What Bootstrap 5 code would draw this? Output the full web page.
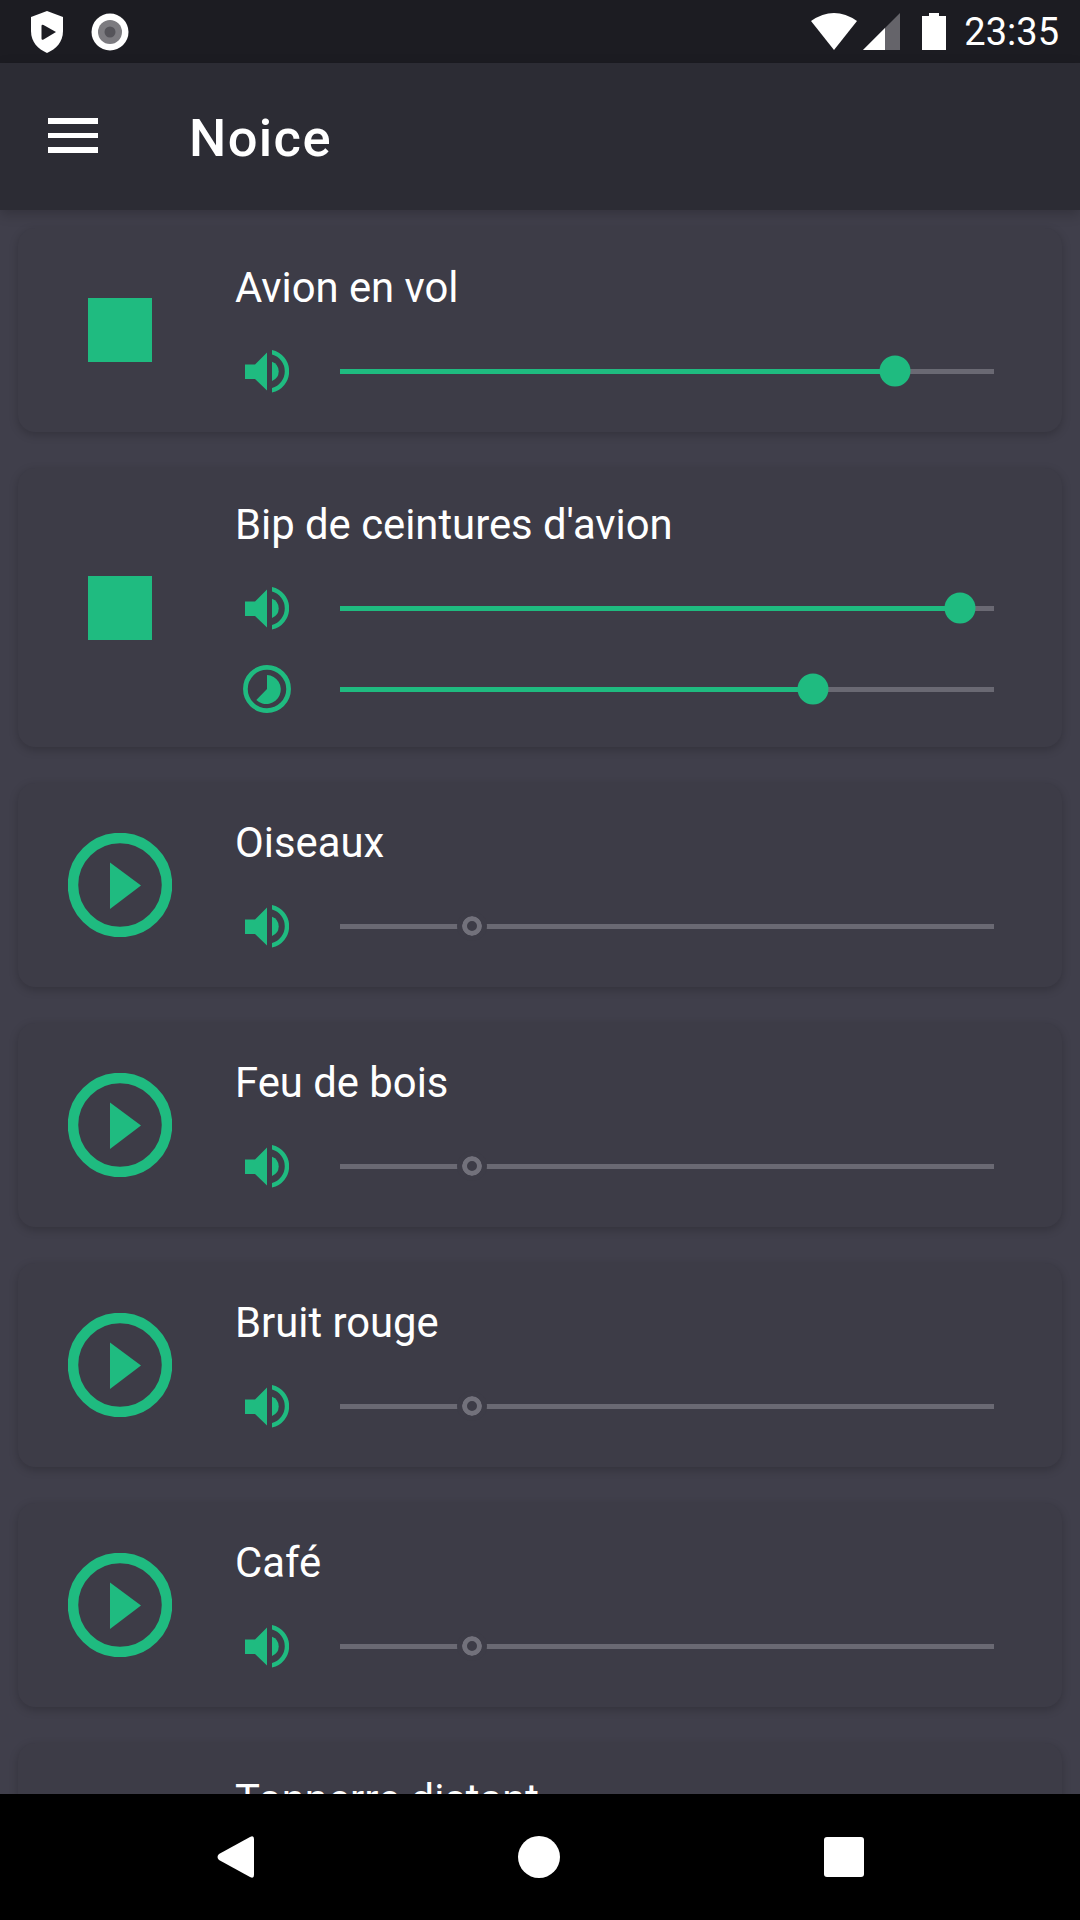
<!DOCTYPE html>
<html lang="fr">
<head>
    <meta charset="UTF-8">
    <meta name="viewport" content="width=device-width, initial-scale=1.0">
    <title>Noice</title>
    <link href="https://cdn.jsdelivr.net/npm/bootstrap@5.3.0/dist/css/bootstrap.min.css" rel="stylesheet">
    <style>
        html, body {
            height: 100%;
        }
        body {
            background: #403f4b;
            font-family: Roboto, "Liberation Sans", sans-serif;
            color: #fff;
            overflow: hidden;
        }
        .status-bar {
            height: 63px;
            flex: none;
            background: #1c1c22;
            padding: 0 21px 0 30px;
        }
        .status-gap-a { margin-left: 27px; }
        .status-gap-b { margin-left: 6px; }
        .status-gap-c { margin-left: 22px; }
        .status-time {
            font-size: 38px;
            line-height: 1;
            margin-left: 18px;
        }
        .app-bar {
            height: 147px;
            flex: none;
            background: #2c2c34;
            box-shadow: 0 4px 12px rgba(0, 0, 0, .2);
            position: relative;
            z-index: 2;
            padding-left: 48px;
        }
        .app-menu {
            margin-bottom: 2px;
        }
        .app-title {
            font-size: 52.500px;
            font-weight: 500;
            line-height: 1;
            margin-left: 91px;
            padding-top: 3px;
            letter-spacing: 1.400px;
        }
        .sound-list {
            flex: 1 1 0;
            min-height: 0;
            overflow: hidden;
            padding: 18px 18px 0;
        }
        .sound-card {
            background: #3d3c47;
            border: 0;
            border-radius: 17px;
            box-shadow: 0 3px 10px rgba(0, 0, 0, .2);
            margin-bottom: 36px;
            flex-direction: row;
            align-items: center;
            flex-shrink: 0;
        }
        .play-col {
            width: 204px;
            flex: none;
        }
        .sound-body {
            flex: 1 1 0;
            padding: 31px 68px 20px 13px;
        }
        .sound-body-tall {
            padding-top: 28px;
            padding-bottom: 17px;
        }
        .sound-name {
            font-size: 41.800px;
            line-height: 58px;
            height: 58px;
            margin-bottom: 13px;
        }
        .slider-row {
            height: 82px;
        }
        .slider-row + .slider-row {
            margin-top: -1px;
        }
        .row-icon {
            width: 105px;
            flex: none;
            padding-left: 10px;
        }
        .timer-icon {
            margin-left: -2px;
        }
        .slider-track {
            flex: 1 1 0;
            height: 5px;
            background: #6a6973;
            position: relative;
        }
        .slider-fill {
            position: absolute;
            left: 0;
            top: 0;
            bottom: 0;
            background: #1fbb80;
        }
        .slider-thumb {
            position: absolute;
            top: 50%;
            width: 31px;
            height: 31px;
            border-radius: 50%;
            background: #1fbb80;
            transform: translate(-50%, -50%);
        }
        .slider-zero {
            position: absolute;
            top: 50%;
            width: 20px;
            height: 20px;
            border-radius: 50%;
            border: 5.500px solid #72717b;
            background: #3d3c47;
            outline: 5px solid #3d3c47;
            transform: translate(-50%, -50%);
        }
        .nav-bar {
            height: 126px;
            flex: none;
            gap: 264px;
            background: #000;
            position: relative;
            z-index: 2;
        }
    </style>
</head>
<body class="d-flex flex-column">
    <svg width="0" height="0" class="position-absolute">
        <defs>
            <symbol id="ico-play" viewBox="0 0 104 104">
                <circle cx="52" cy="52" r="47" fill="none" stroke="#1fbb80" stroke-width="10.500"/>
                <path d="M42 29.500 L73 52.500 L42 76 Z" fill="#1fbb80"/>
            </symbol>
            <symbol id="ico-volume" viewBox="0 -1 44 44">
                <path d="M0 14.500 H10 L22 2.500 V40.500 L10 29 H0 Z" fill="#1fbb80"/>
                <path d="M27 0 A21.800 21.800 0 0 1 27 42.600 V38 A17.300 17.300 0 0 0 27 4.600 Z" fill="#1fbb80"/>
                <path d="M27 11.700 A10.300 10.300 0 0 1 27 31 Z" fill="#1fbb80"/>
            </symbol>
            <symbol id="ico-timer" viewBox="0 0 48 48">
                <circle cx="24" cy="24" r="21.600" fill="none" stroke="#1fbb80" stroke-width="4.700"/>
                <path d="M24 10 A14.500 14.500 0 1 1 13.300 35 L24 24 Z" fill="#1fbb80"/>
            </symbol>
        </defs>
    </svg>

    <div class="status-bar d-flex align-items-center">
        <svg width="34" height="42" viewBox="0 0 34 42">
            <path d="M17 0 L33 6 V20 C33 31 26 38 17 42 C8 38 1 31 1 20 V6 Z" fill="#fff"/>
            <path d="M11.500 15 Q11.500 13 13.500 14 L26 21 L13.500 28.500 Q11.500 29.500 11.500 27.500 Z" fill="#1c1c22"/>
        </svg>
        <svg width="38" height="38" viewBox="0 0 38 38" class="status-gap-a">
            <circle cx="19" cy="19" r="18.500" fill="#fff"/>
            <circle cx="19" cy="19" r="12" fill="#7c7b80"/>
            <circle cx="19" cy="19" r="5.500" fill="#55545a"/>
        </svg>
        <div class="ms-auto d-flex align-items-center">
            <svg width="46" height="38" viewBox="0 0 46 38">
                <path d="M0 8 Q23 -8 46 8 L23 37 Z" fill="#fff"/>
            </svg>
            <svg width="37" height="37" viewBox="0 0 37 37" class="status-gap-b">
                <path d="M37 0 V37 H0 Z" fill="#65646a"/>
                <path d="M22 15 V37 H0 Z" fill="#fff"/>
            </svg>
            <svg width="24" height="38" viewBox="0 0 24 38" class="status-gap-c">
                <path d="M7 0 H17 V3 H24 V37 H0 V3 H7 Z" fill="#fff"/>
            </svg>
            <span class="status-time">23:35</span>
        </div>
    </div>

    <div class="app-bar d-flex align-items-center">
        <svg width="50" height="35" viewBox="0 0 50 35" class="app-menu">
            <path d="M0 0 H50 V6 H0 Z M0 15 H50 V20 H0 Z M0 29 H50 V35 H0 Z" fill="#fff"/>
        </svg>
        <span class="app-title">Noice</span>
    </div>

    <div class="sound-list d-flex flex-column">
        <div class="card sound-card">
            <div class="play-col d-flex justify-content-center">
                <svg width="64" height="64"><rect width="64" height="64" fill="#1fbb80"/></svg>
            </div>
            <div class="sound-body">
                <div class="sound-name">Avion en vol</div>
                <div class="slider-row d-flex align-items-center">
                    <div class="row-icon"><svg width="44" height="44" class="d-block"><use href="#ico-volume"/></svg></div>
                    <div class="slider-track">
                        <div class="slider-fill" style="width: 84.900%"></div>
                        <div class="slider-thumb" style="left: 84.900%"></div>
                    </div>
                </div>
            </div>
        </div>

        <div class="card sound-card">
            <div class="play-col d-flex justify-content-center">
                <svg width="64" height="64"><rect width="64" height="64" fill="#1fbb80"/></svg>
            </div>
            <div class="sound-body sound-body-tall">
                <div class="sound-name">Bip de ceintures d'avion</div>
                <div class="slider-row d-flex align-items-center">
                    <div class="row-icon"><svg width="44" height="44" class="d-block"><use href="#ico-volume"/></svg></div>
                    <div class="slider-track">
                        <div class="slider-fill" style="width: 94.800%"></div>
                        <div class="slider-thumb" style="left: 94.800%"></div>
                    </div>
                </div>
                <div class="slider-row d-flex align-items-center">
                    <div class="row-icon"><svg width="48" height="48" class="d-block timer-icon"><use href="#ico-timer"/></svg></div>
                    <div class="slider-track">
                        <div class="slider-fill" style="width: 72.400%"></div>
                        <div class="slider-thumb" style="left: 72.400%"></div>
                    </div>
                </div>
            </div>
        </div>

        <div class="card sound-card">
            <div class="play-col d-flex justify-content-center">
                <svg width="104" height="104"><use href="#ico-play"/></svg>
            </div>
            <div class="sound-body">
                <div class="sound-name">Oiseaux</div>
                <div class="slider-row d-flex align-items-center">
                    <div class="row-icon"><svg width="44" height="44" class="d-block"><use href="#ico-volume"/></svg></div>
                    <div class="slider-track"><div class="slider-zero" style="left: 20.200%"></div></div>
                </div>
            </div>
        </div>

        <div class="card sound-card">
            <div class="play-col d-flex justify-content-center">
                <svg width="104" height="104"><use href="#ico-play"/></svg>
            </div>
            <div class="sound-body">
                <div class="sound-name">Feu de bois</div>
                <div class="slider-row d-flex align-items-center">
                    <div class="row-icon"><svg width="44" height="44" class="d-block"><use href="#ico-volume"/></svg></div>
                    <div class="slider-track"><div class="slider-zero" style="left: 20.200%"></div></div>
                </div>
            </div>
        </div>

        <div class="card sound-card">
            <div class="play-col d-flex justify-content-center">
                <svg width="104" height="104"><use href="#ico-play"/></svg>
            </div>
            <div class="sound-body">
                <div class="sound-name">Bruit rouge</div>
                <div class="slider-row d-flex align-items-center">
                    <div class="row-icon"><svg width="44" height="44" class="d-block"><use href="#ico-volume"/></svg></div>
                    <div class="slider-track"><div class="slider-zero" style="left: 20.200%"></div></div>
                </div>
            </div>
        </div>

        <div class="card sound-card">
            <div class="play-col d-flex justify-content-center">
                <svg width="104" height="104"><use href="#ico-play"/></svg>
            </div>
            <div class="sound-body">
                <div class="sound-name">Café</div>
                <div class="slider-row d-flex align-items-center">
                    <div class="row-icon"><svg width="44" height="44" class="d-block"><use href="#ico-volume"/></svg></div>
                    <div class="slider-track"><div class="slider-zero" style="left: 20.200%"></div></div>
                </div>
            </div>
        </div>

        <div class="card sound-card">
            <div class="play-col d-flex justify-content-center">
                <svg width="104" height="104"><use href="#ico-play"/></svg>
            </div>
            <div class="sound-body sound-body-tall">
                <div class="sound-name">Tonnerre distant</div>
                <div class="slider-row d-flex align-items-center">
                    <div class="row-icon"><svg width="44" height="44" class="d-block"><use href="#ico-volume"/></svg></div>
                    <div class="slider-track"><div class="slider-zero" style="left: 20.200%"></div></div>
                </div>
                <div class="slider-row d-flex align-items-center">
                    <div class="row-icon"><svg width="48" height="48" class="d-block timer-icon"><use href="#ico-timer"/></svg></div>
                    <div class="slider-track"><div class="slider-zero" style="left: 20.200%"></div></div>
                </div>
            </div>
        </div>
    </div>

    <div class="nav-bar d-flex align-items-center justify-content-center">
        <svg width="37" height="42" viewBox="0 0 37 42">
            <path d="M33 1 Q37 -1 37 3 V39 Q37 43 33 41 L2 24 Q-1 21 2 18 Z" fill="#fff"/>
        </svg>
        <svg width="42" height="42"><circle cx="21" cy="21" r="21" fill="#fff"/></svg>
        <svg width="40" height="40"><rect width="40" height="40" rx="3" fill="#fff"/></svg>
    </div>

    <script src="https://cdn.jsdelivr.net/npm/bootstrap@5.3.0/dist/js/bootstrap.bundle.min.js"></script>
</body>
</html>
